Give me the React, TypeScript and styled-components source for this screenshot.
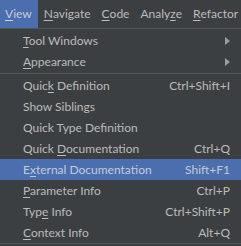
import styled, { createGlobalStyle } from 'styled-components';

const GlobalStyle = createGlobalStyle`
  html, body {
    margin: 0;
    padding: 0;
    background: #3c3f41;
  }
  body {
    font-family: Lato, 'Open Sans', sans-serif;
    font-size: 12px;
    color: #bbbbbb;
  }
`;

type Item = {
  label: string;
  mnemonic?: number;
  shortcut?: string;
  submenu?: boolean;
  selected?: boolean;
  separatorAfter?: boolean;
};

const topMenus: { label: string; mnemonic: number; active?: boolean }[] = [
  { label: 'View', mnemonic: 0, active: true },
  { label: 'Navigate', mnemonic: 0 },
  { label: 'Code', mnemonic: 0 },
  { label: 'Analyze', mnemonic: 5 },
  { label: 'Refactor', mnemonic: 0 },
];

const items: Item[] = [
  { label: 'Tool Windows', mnemonic: 0, submenu: true },
  { label: 'Appearance', mnemonic: 0, submenu: true, separatorAfter: true },
  { label: 'Quick Definition', mnemonic: 4, shortcut: 'Ctrl+Shift+I' },
  { label: 'Show Siblings' },
  { label: 'Quick Type Definition' },
  { label: 'Quick Documentation', mnemonic: 6, shortcut: 'Ctrl+Q' },
  { label: 'External Documentation', mnemonic: 1, shortcut: 'Shift+F1', selected: true },
  { label: 'Parameter Info', mnemonic: 0, shortcut: 'Ctrl+P' },
  { label: 'Type Info', mnemonic: 3, shortcut: 'Ctrl+Shift+P' },
  { label: 'Context Info', mnemonic: 0, shortcut: 'Alt+Q' },
];

function Label({ text, mnemonic }: { text: string; mnemonic?: number }) {
  if (mnemonic === undefined) return <>{text}</>;
  return (
    <>
      {text.slice(0, mnemonic)}
      <u>{text[mnemonic]}</u>
      {text.slice(mnemonic + 1)}
    </>
  );
}

export default function App() {
  return (
    <>
      <GlobalStyle />
      <Window>
        <MenuBar>
          {topMenus.map((m) => (
            <TopItem key={m.label} $active={m.active}>
              <Label text={m.label} mnemonic={m.mnemonic} />
            </TopItem>
          ))}
        </MenuBar>
        <Popup>
          {items.map((item) => (
            <div key={item.label}>
              <Row $selected={item.selected}>
                <RowLabel>
                  <Label text={item.label} mnemonic={item.mnemonic} />
                </RowLabel>
                {item.shortcut && <Shortcut>{item.shortcut}</Shortcut>}
                {item.submenu && (
                  <Arrow width="5" height="8" viewBox="0 0 5 8">
                    <path d="M0 0 L5 4 L0 8 Z" fill="#9a9da0" />
                  </Arrow>
                )}
              </Row>
              {item.separatorAfter && <Separator />}
            </div>
          ))}
        </Popup>
      </Window>
    </>
  );
}

const Window = styled.div`
  width: 241px;
  height: 246px;
  overflow: hidden;
  background: #3c3f41;
`;

const MenuBar = styled.div`
  display: flex;
  height: 28px;
  align-items: stretch;
  white-space: nowrap;
`;

const TopItem = styled.div<{ $active?: boolean }>`
  display: flex;
  align-items: center;
  padding: 0 5px 1px 6px;
  background: ${(p) => (p.$active ? '#4b6eaf' : 'transparent')};
  color: ${(p) => (p.$active ? '#c8ccd4' : '#bbbbbb')};

  &:first-child {
    margin-left: -1px;
    padding-right: 6px;
  }

  u {
    text-decoration-thickness: 1px;
    text-underline-offset: 2px;
  }
`;

const Popup = styled.div`
  border-top: 1px solid #515658;
  border-bottom: 1px solid #515658;
  padding-top: 1px;
  background: #3c3f41;
`;

const Row = styled.div<{ $selected?: boolean }>`
  display: flex;
  align-items: center;
  height: 21px;
  padding: 0 8px 0 23px;
  background: ${(p) => (p.$selected ? '#4b6eaf' : 'transparent')};
  color: ${(p) => (p.$selected ? '#c5cad6' : '#bbbbbb')};

  u {
    text-decoration-thickness: 1px;
    text-underline-offset: 2px;
  }
`;

const RowLabel = styled.span`
  flex: 1;
  white-space: nowrap;
`;

const Shortcut = styled.span`
  white-space: nowrap;
  margin-right: 3px;
`;

const Arrow = styled.svg`
  margin-right: 3px;
`;

const Separator = styled.div`
  height: 3px;
  display: flex;
  align-items: center;

  &::before {
    content: '';
    flex: 1;
    height: 1px;
    background: #515658;
  }
`;
